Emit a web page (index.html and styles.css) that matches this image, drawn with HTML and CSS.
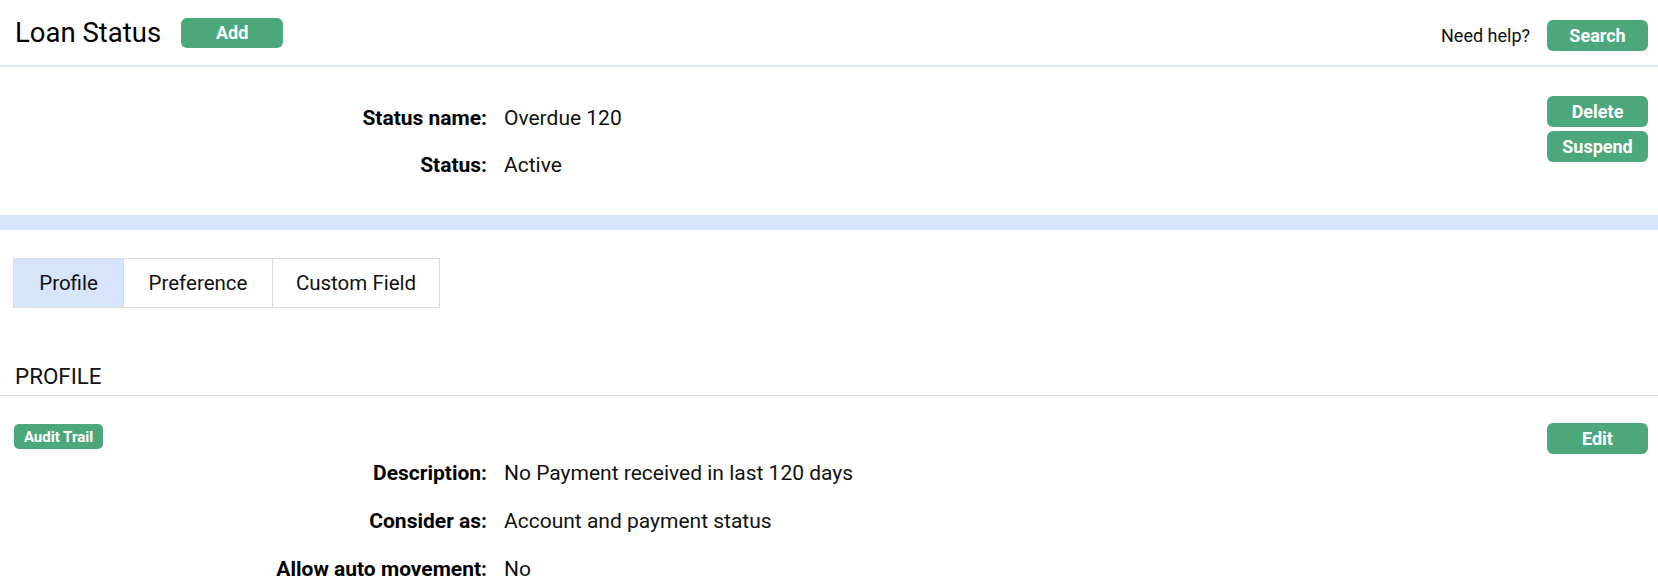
FILE: index.html
```html
<!DOCTYPE html>
<html>
<head>
<meta charset="utf-8">
<link rel="stylesheet" href="styles.css">
</head>
<body>
<header class="topbar">
  <div class="title-group">
    <h1 class="page-title">Loan Status</h1>
    <button class="btn btn-add">Add</button>
  </div>
  <div class="help-group">
    <span class="help-text">Need help?</span>
    <button class="btn btn-wide">Search</button>
  </div>
</header>

<section class="summary">
  <div class="fields fields-summary">
    <div class="label">Status name:</div><div class="value">Overdue 120</div>
    <div class="label">Status:</div><div class="value">Active</div>
  </div>
  <div class="actions">
    <button class="btn btn-wide">Delete</button>
    <button class="btn btn-wide">Suspend</button>
  </div>
</section>

<div class="band"></div>

<nav class="tabs">
  <div class="tab tab-active">Profile</div>
  <div class="tab">Preference</div>
  <div class="tab">Custom Field</div>
</nav>

<h2 class="section-title">PROFILE</h2>

<section class="profile">
  <div class="profile-bar">
    <button class="btn btn-small">Audit Trail</button>
    <button class="btn btn-wide btn-edit">Edit</button>
  </div>
  <div class="fields fields-profile">
    <div class="label">Description:</div><div class="value">No Payment received in last 120 days</div>
    <div class="label">Consider as:</div><div class="value">Account and payment status</div>
    <div class="label">Allow auto movement:</div><div class="value">No</div>
  </div>
</section>
</body>
</html>
```

FILE: styles.css
```css
* { box-sizing: border-box; }
body {
  margin: 0;
  font-family: Roboto, "Noto Sans", sans-serif;
  color: #111;
  background: #fff;
}
.btn {
  font-family: inherit;
  background: #4ca87b;
  color: #fff;
  border: none;
  border-radius: 6px;
  font-weight: bold;
  font-size: 18px;
  cursor: pointer;
  padding: 0;
}
.topbar {
  display: flex;
  justify-content: space-between;
  align-items: center;
  height: 67px;
  padding: 0 10px 0 15px;
  border-bottom: 2px solid #dce7fb;
}
.title-group { display: flex; align-items: center; gap: 20px; }
.page-title {
  margin: 0;
  font-size: 27.5px;
  font-weight: normal;
  color: #000;
}
.btn-add { width: 102px; height: 30px; }
.help-group { display: flex; align-items: center; gap: 17px; padding-top: 6px; }
.help-text { font-size: 18px; }
.btn-wide { width: 101px; height: 31px; }

.summary {
  display: flex;
  justify-content: space-between;
  height: 148px;
  padding: 24px 10px 0 0;
}
.fields {
  display: grid;
  grid-template-columns: var(--labelw) auto;
  column-gap: 17px;
  align-content: start;
  font-size: 21px;
}
.fields-summary { --labelw: 487px; row-gap: 23px; padding-top: 15px; }
.label { text-align: right; font-weight: bold; color: #000; }
.value { color: #111; }
.actions { display: flex; flex-direction: column; gap: 4px; padding-top: 5px; }

.band { height: 15px; background: #d6e4fc; }

.tabs {
  display: flex;
  margin: 28px 0 0 13px;
  width: 427px;
  border: 1px solid #dddddd;
  height: 50px;
}
.tab {
  display: flex;
  align-items: center;
  justify-content: center;
  font-size: 20.5px;
  border-left: 1px solid #dddddd;
}
.tab:first-child { border-left: none; width: 109px; }
.tab:nth-child(2) { width: 149px; }
.tab:nth-child(3) { flex: 1; }
.tab-active { background: #d6e4fc; }

.section-title {
  margin: 55px 0 0;
  padding: 0 15px 6px;
  font-size: 22.4px;
  font-weight: normal;
  border-bottom: 1px solid #dddddd;
}

.profile { padding: 27px 10px 0 14px; }
.profile-bar { display: flex; justify-content: space-between; align-items: flex-start; }
.btn-small { width: 89px; height: 25px; font-size: 15px; border-radius: 5px; margin-top: 1px; }
.btn-edit { height: 31px; }
.fields-profile { --labelw: 473px; row-gap: 24px; margin-top: 7px; }
```
